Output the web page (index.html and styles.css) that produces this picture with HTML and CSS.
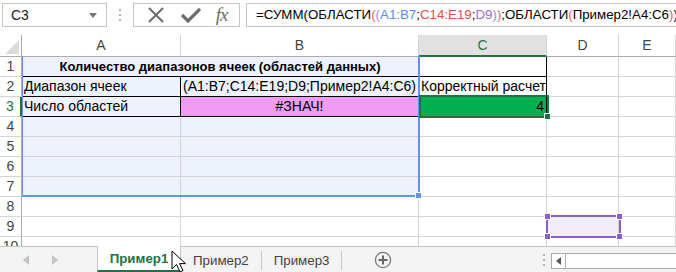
FILE: index.html
```html
<!DOCTYPE html>
<html lang="ru">
<head>
  <meta charset="UTF-8">
  <title>ОБЛАСТИ</title>
  <link rel="stylesheet" href="styles.css">
</head>
<body>

  <!-- formula bar -->
  <div class="formula-bar">
    <div class="name-box">
      <span>C3</span>
      <svg class="caret" width="8" height="5" viewBox="0 0 8 5"><path d="M0 0h8L4 5z" fill="#777"/></svg>
    </div>
    <div class="grip"><i></i><i></i><i></i></div>
    <div class="fx-buttons">
      <svg width="20" height="20" viewBox="0 0 20 20"><path d="M3 3L17 17M17 3L3 17" stroke="#6d6d6d" stroke-width="2" fill="none"/></svg>
      <svg width="20" height="18" viewBox="0 0 20 18"><path d="M1 9l6 6L19 3" stroke="#6d6d6d" stroke-width="3.2" fill="none"/></svg>
      <span class="fx">fx</span>
    </div>
    <div class="formula">=СУММ(ОБЛАСТИ<span class="p1">(</span><span class="p2">(</span><span class="r1">A1:B7</span>;<span class="r2">C14:E19</span>;<span class="r3">D9</span><span class="p2">)</span><span class="p1">)</span>;ОБЛАСТИ<span class="p1">(</span>Пример2!A4:C6<span class="p1">)</span>)</div>
  </div>

  <!-- sheet grid -->
  <div class="sheet">
    <div class="corner"><svg width="14" height="14" viewBox="0 0 14 14"><path d="M14 0V14H0z" fill="#dcdcdc"/></svg></div>
    <div class="ch">A</div>
    <div class="ch">B</div>
    <div class="ch active">C</div>
    <div class="ch">D</div>
    <div class="ch">E</div>

    <div class="rh">1</div>
    <div class="c rng bk title span2">Количество диапазонов ячеек (областей данных)</div>
    <div class="c bk"></div>
    <div class="c"></div>
    <div class="c"></div>

    <div class="rh">2</div>
    <div class="c rng bk">Диапазон ячеек</div>
    <div class="c rng bk">(A1:B7;C14:E19;D9;Пример2!A4:C6)</div>
    <div class="c bk">Корректный расчет</div>
    <div class="c"></div>
    <div class="c"></div>

    <div class="rh active">3</div>
    <div class="c rng bk">Число областей</div>
    <div class="c pink bk center">#ЗНАЧ!</div>
    <div class="c green bk right">4</div>
    <div class="c"></div>
    <div class="c"></div>

    <div class="rh">4</div>
    <div class="c rng"></div><div class="c rng"></div><div class="c"></div><div class="c"></div><div class="c"></div>
    <div class="rh">5</div>
    <div class="c rng"></div><div class="c rng"></div><div class="c"></div><div class="c"></div><div class="c"></div>
    <div class="rh">6</div>
    <div class="c rng"></div><div class="c rng"></div><div class="c"></div><div class="c"></div><div class="c"></div>
    <div class="rh">7</div>
    <div class="c rng"></div><div class="c rng"></div><div class="c"></div><div class="c"></div><div class="c"></div>
    <div class="rh">8</div>
    <div class="c"></div><div class="c"></div><div class="c"></div><div class="c"></div><div class="c"></div>
    <div class="rh">9</div>
    <div class="c"></div><div class="c"></div><div class="c"></div><div class="c ref-d9"></div><div class="c"></div>
    <div class="rh">10</div>
    <div class="c"></div><div class="c"></div><div class="c"></div><div class="c"></div><div class="c"></div>

    <!-- range highlights drawn over the grid -->
    <div class="hl hl-blue"><b class="h br"></b></div>
    <div class="hl hl-sel"><b class="h br"></b></div>
    <div class="hl hl-purple"><b class="h tl"></b><b class="h tr"></b><b class="h bl"></b><b class="h br"></b></div>
  </div>

  <!-- sheet tabs -->
  <div class="tabs">
    <div class="nav">
      <svg width="6" height="10" viewBox="0 0 6 10"><path d="M6 0V10L0 5z" fill="#c4c4c4"/></svg>
      <svg width="6" height="10" viewBox="0 0 6 10"><path d="M0 0V10L6 5z" fill="#c4c4c4"/></svg>
    </div>
    <div class="tab current">Пример1</div>
    <div class="tab">Пример2</div>
    <div class="tab">Пример3</div>
    <div class="add">
      <svg width="18" height="18" viewBox="0 0 18 18"><circle cx="9" cy="9" r="7.6" stroke="#7a7a7a" stroke-width="1.3" fill="none"/><path d="M9 4.5v9M4.5 9h9" stroke="#666" stroke-width="2"/></svg>
    </div>
    <div class="spacer"></div>
    <div class="grip small"><i></i><i></i><i></i></div>
    <div class="hscroll">
      <div class="arrow"><svg width="5" height="8" viewBox="0 0 5 8"><path d="M5 0V8L0 4z" fill="#555"/></svg></div>
    </div>

    <svg class="cursor" width="16" height="24" viewBox="0 0 16 24">
      <path d="M1 1V19L5.5 14.5L9 22L12 20.5L8.6 13.6H14.5z" fill="#fff" stroke="#000" stroke-width="1"/>
    </svg>
  </div>

</body>
</html>
```

FILE: styles.css
```css
/* ---------- page ---------- */
body {
  margin: 0;
  width: 676px;
  height: 272px;
  overflow: hidden;
  background: #fff;
  font-family: "Liberation Sans", Arial, sans-serif;
  color: #000;
}

/* ---------- formula bar ---------- */
.formula-bar {
  display: flex;
  align-items: stretch;
  height: 24px;
  padding: 3px 0 0 2px;
  margin-bottom: 8px;
}

.name-box {
  width: 105px;
  box-sizing: border-box;
  border: 1px solid #c6c6c6;
  display: flex;
  align-items: center;
  justify-content: space-between;
  padding: 0 9px 0 8px;
  font-size: 14px;
  color: #222;
}

.grip {
  width: 26px;
  display: flex;
  flex-direction: column;
  align-items: center;
  justify-content: center;
  gap: 3px;
}

.grip i {
  display: block;
  width: 2px;
  height: 2px;
  background: #b0b0b0;
}

.fx-buttons {
  width: 107px;
  box-sizing: border-box;
  border: 1px solid #c6c6c6;
  display: flex;
  align-items: center;
  justify-content: space-around;
  padding: 0 4px 0 4px;
}

.fx {
  font-family: "Liberation Serif", serif;
  font-style: italic;
  font-size: 19px;
  color: #6d6d6d;
  letter-spacing: -1px;
}

.formula {
  flex: 1;
  margin-left: 6px;
  border: 1px solid #c6c6c6;
  border-right: none;
  padding-left: 9px;
  font-size: 13.3px;
  line-height: 22px;
  white-space: nowrap;
  overflow: hidden;
}

.p1 { color: #e8686f; }
.p2 { color: #a98de2; }
.r1 { color: #5b8ee6; }
.r2 { color: #e24c4c; }
.r3 { color: #9a6ad0; }

/* ---------- grid ---------- */
.sheet {
  position: relative;
  height: 211px;
  overflow: hidden;
  display: grid;
  grid-template-columns: 22px 159px 238px 128px 72px 1fr;
  grid-template-rows: 22px;
  grid-auto-rows: 20px;
  font-size: 14px;
}

.corner {
  border-right: 1px solid #ababab;
  border-bottom: 1px solid #ababab;
  display: flex;
  align-items: flex-end;
  justify-content: flex-end;
  padding: 0 2px 2px 0;
}

.ch {
  border-right: 1px solid #d4d4d4;
  border-bottom: 1px solid #ababab;
  text-align: center;
  line-height: 21px;
  font-size: 14px;
  color: #444;
}

.ch.active {
  background: #e1e1e1;
  color: #217346;
  border-bottom: 2px solid #217346;
  line-height: 20px;
}

.rh {
  border-right: 1px solid #ababab;
  border-bottom: 1px solid #d4d4d4;
  text-align: center;
  line-height: 19px;
  font-size: 14px;
  color: #444;
}

.rh.active {
  color: #217346;
  border-right: 2px solid #217346;
}

.c {
  border-right: 1px solid #d4d4d4;
  border-bottom: 1px solid #d4d4d4;
  padding: 0 2px;
  line-height: 19px;
  white-space: nowrap;
  overflow: hidden;
}

.span2 { grid-column: span 2; }
.center { text-align: center; }
.right { text-align: right; }

.title {
  font-weight: bold;
  font-size: 13px;
  text-align: center;
}

.rng { background: #eef2fc; }
.pink { background: #f09cf4; }
.green { background: #00b050; }
.bk {
  border-right-color: #000;
  border-bottom-color: #000;
}

.ref-d9 { background: #f0ecf8; }

/* ---------- reference highlights (over the grid) ---------- */
.hl {
  position: absolute;
  box-sizing: border-box;
  pointer-events: none;
}

.hl-blue {
  left: 22px;
  top: 21px;
  width: 398px;
  height: 141px;
  border: 2px solid #6593e6;
  border-top: none;
  border-left-width: 1px;
}

.hl-sel {
  left: 419px;
  top: 60px;
  width: 130px;
  height: 23px;
  border: 2px solid #217346;
}

.hl-purple {
  left: 546px;
  top: 180px;
  width: 75px;
  height: 23px;
  border: 2px solid #8c5fc4;
}

.h {
  position: absolute;
  width: 5px;
  height: 5px;
  border: 1px solid #fff;
}

.hl-blue .h { background: #6593e6; right: -4px; bottom: -4px; }
.hl-sel .h { background: #217346; right: -4px; bottom: -4px; }
.hl-purple .h { background: #8c5fc4; }
.hl-purple .tl { left: -4px; top: -4px; }
.hl-purple .tr { right: -4px; top: -4px; }
.hl-purple .bl { left: -4px; bottom: -4px; }
.hl-purple .br { right: -4px; bottom: -4px; }

/* ---------- sheet tabs ---------- */
.tabs {
  position: relative;
  height: 26px;
  background: #f3f3f3;
  border-top: 1px solid #c6c6c6;
  display: flex;
  align-items: stretch;
  font-size: 13.3px;
  color: #444;
}

.nav {
  width: 97px;
  display: flex;
  align-items: center;
  gap: 23px;
  padding-left: 23px;
  box-sizing: border-box;
}

.tab {
  padding: 0 12px;
  display: flex;
  align-items: center;
  border-right: 1px solid #c6c6c6;
  margin: 4px 0 3px;
}

.tab.current {
  box-sizing: border-box;
  width: 84px;
  justify-content: center;
  margin: -1px 0 0;
  background: #fff;
  border-left: 1px solid #c6c6c6;
  border-right: 1px solid #c6c6c6;
  border-bottom: 3px solid #217346;
  color: #217346;
  font-weight: bold;
  padding: 0;
}

.add {
  width: 82px;
  display: flex;
  align-items: center;
  justify-content: center;
}

.spacer { flex: 1; }

.grip.small { width: 14px; }

.hscroll {
  flex: 0 0 124px;
  margin: 6px 0 4px;
  border: 1px solid #ababab;
  border-right: none;
  background: #fff;
  display: flex;
}

.arrow {
  width: 13px;
  border-right: 1px solid #ababab;
  display: flex;
  align-items: center;
  justify-content: center;
}

.cursor {
  position: absolute;
  left: 171px;
  top: 3px;
}
```
